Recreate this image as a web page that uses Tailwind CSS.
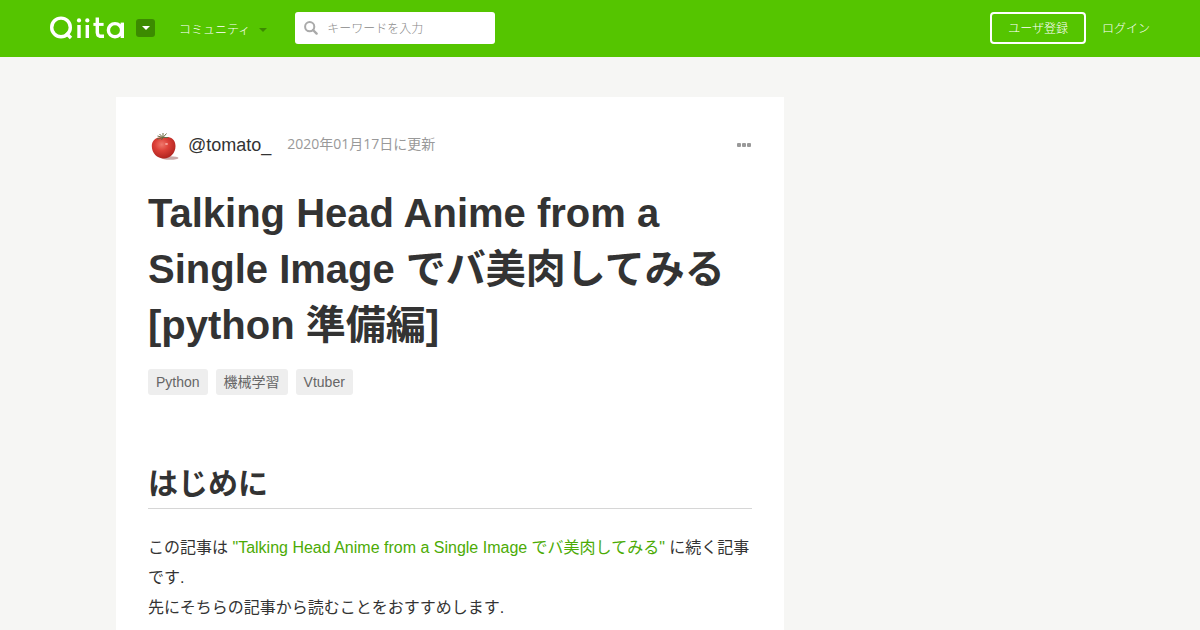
<!DOCTYPE html>
<html lang="ja">
<head>
    <meta charset="UTF-8">
    <meta name="viewport" content="width=device-width, initial-scale=1.0">
    <title>Talking Head Anime from a Single Image でバ美肉してみる [python 準備編] - Qiita</title>
    <script src="https://cdn.jsdelivr.net/npm/@tailwindcss/browser@4"></script>
</head>
<body class="bg-[#f6f6f4] text-[#333] font-['Liberation_Sans','Noto_Sans_CJK_JP',sans-serif]">
    <!-- Header -->
    <header class="bg-[#55c500] text-white">
        <div class="max-w-[1100px] h-[57px] pb-px mx-auto flex items-center">
            <a href="#" aria-label="Qiita">
                <svg class="w-[76px] h-6" viewBox="0 0 76 24" fill="none" stroke="#fff" stroke-width="3.4" stroke-linejoin="round">
                    <circle cx="11" cy="11.4" r="9.3"/>
                    <line x1="16" y1="17" x2="21" y2="22"/>
                    <line x1="29" y1="9" x2="29" y2="22"/>
                    <line x1="37.3" y1="9" x2="37.3" y2="22"/>
                    <circle cx="29" cy="4.4" r="2.1" fill="#fff" stroke="none"/>
                    <circle cx="37.3" cy="4.4" r="2.1" fill="#fff" stroke="none"/>
                    <polyline points="47.3,1.4 47.3,16.500 48,19.2 50,20.3 54,20.3"/>
                    <line x1="43.4" y1="8.4" x2="53.6" y2="8.4" stroke-width="3"/>
                    <circle cx="65" cy="14.2" r="6.6"/>
                    <line x1="72.3" y1="6.6" x2="72.3" y2="22"/>
                </svg>
            </a>
            <button type="button" aria-label="サービス" class="ml-[10px] w-[19px] h-[18px] rounded-[3px] bg-[#3c8b00] flex items-center justify-center">
                <svg class="w-2 h-1" viewBox="0 0 8 4" fill="#fff"><path d="M0 0h8L4 4z"/></svg>
            </button>
            <button type="button" class="ml-6 pt-1 flex items-center gap-[9px] text-xs font-light">
                コミュニティ
                <svg class="w-2 h-1" viewBox="0 0 8 4" fill="#3c8b00"><path d="M0 0h8L4 4z"/></svg>
            </button>
            <form class="relative ml-7">
                <label for="q" class="absolute left-[9px] top-[9px]" aria-label="検索">
                    <svg class="w-[14px] h-[14px]" viewBox="0 0 14 14" fill="none" stroke="#aaa" stroke-width="2"><circle cx="5.7" cy="5.7" r="4.6"/><path d="M9 9l3.6 3.6" stroke-width="2.4" stroke-linecap="round"/></svg>
                </label>
                <input id="q" type="text" placeholder="キーワードを入力" class="block w-[200px] h-8 rounded-[3px] bg-white pt-px pl-8 pr-2 text-xs font-light text-[#333] placeholder:text-[#888]">
            </form>
            <nav class="ml-auto flex items-center gap-4 text-xs font-light">
                <a href="#" class="h-8 px-4 pt-px flex items-center border-2 border-white rounded">ユーザ登録</a>
                <a href="#" class="pt-px">ログイン</a>
            </nav>
        </div>
    </header>

    <!-- Article -->
    <main class="max-w-[968px] mx-auto pt-10">
        <article class="w-[69%] bg-white px-8 pt-8 pb-2">
            <div class="flex items-center h-8">
                <a href="#" class="flex items-center gap-2 text-lg">
                    <svg class="w-8 h-8" viewBox="0 0 32 32">
                        <defs>
                            <radialGradient id="skin" cx="0.42" cy="0.35" r="0.65">
                                <stop offset="0" stop-color="#f0786c"/>
                                <stop offset="0.45" stop-color="#dc4038"/>
                                <stop offset="1" stop-color="#b02420"/>
                            </radialGradient>
                        </defs>
                        <ellipse cx="22" cy="29" rx="8.500" ry="1.800" fill="#c9a9a9"/>
                        <path d="M15.500 8.700C19 7 27.500 8 27.500 17C27.500 24.500 22 29.500 16 29.500C9 29.500 3.800 24 3.800 17C3.800 9.500 11 7 15.500 8.700Z" fill="url(#skin)"/>
                        <path d="M15 8.500L9.500 7M15 8.500L9 10M15 8.500L11.500 5M15 8.500L15 4M15 8.500L18.500 4.500M15 8.500L20 8.500M15 8.500L13.500 11" stroke="#6c6a42" stroke-width="1" fill="none"/>
                        <ellipse cx="18.500" cy="15" rx="1.500" ry="1" fill="#f7a29a"/>
                    </svg>
                    @tomato_
                </a>
                <time datetime="2020-01-17" class="ml-4 pb-[2px] text-sm text-[#999] font-['Open_Sans','Noto_Sans_CJK_JP',sans-serif]">2020年01月17日に更新</time>
                <button type="button" aria-label="メニュー" class="ml-auto">
                    <svg class="w-4 h-4" viewBox="0 0 16 16" fill="#999"><rect x="1" y="6" width="4" height="4" rx="1"/><rect x="6" y="6" width="4" height="4" rx="1"/><rect x="11" y="6" width="4" height="4" rx="1"/></svg>
                </button>
            </div>

            <h1 class="mt-6 text-[40px] leading-14 font-bold">Talking Head Anime from a Single Image でバ美肉してみる [python 準備編]</h1>

            <div class="mt-4 flex gap-2 text-sm leading-[26px] text-[#666]">
                <a href="#" class="h-[26px] px-2 rounded-[3px] bg-[#eee]">Python</a>
                <a href="#" class="h-[26px] px-2 rounded-[3px] bg-[#eee]">機械学習</a>
                <a href="#" class="h-[26px] px-2 rounded-[3px] bg-[#eee]">Vtuber</a>
            </div>

            <h2 class="mt-[66px] pb-[2px] border-b border-[#d6d6d6] text-[30px] leading-[45px] font-bold">はじめに</h2>
            <p class="mt-6 text-base leading-[30px]">
                この記事は <a href="#" class="text-[#4cab05]">"Talking Head Anime from a Single Image でバ美肉してみる"</a> に続く記事です.<br>
                先にそちらの記事から読むことをおすすめします.
            </p>
        </article>
    </main>
</body>
</html>
